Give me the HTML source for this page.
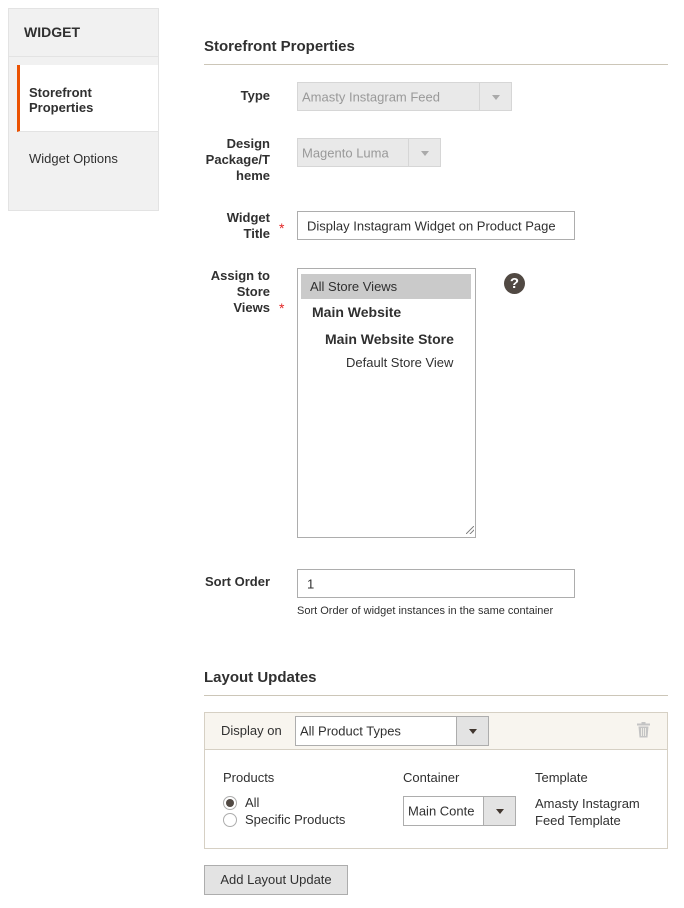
<!DOCTYPE html><html><head><style>
*{box-sizing:border-box;margin:0;padding:0}
body{width:684px;height:908px;background:#fff;font-family:"Liberation Sans",sans-serif;font-size:13px;color:#303030;position:relative;overflow:hidden}
.a{position:absolute;white-space:nowrap}
.lbl{position:absolute;text-align:right;font-weight:bold;color:#303030;font-size:13px;line-height:16px}
.sel{position:absolute;border:1px solid #adadad;background:#fff}
.sel .t{position:absolute;left:4px;top:50%;transform:translateY(-50%);font-size:13px}
.sel .ar{position:absolute;right:0;top:0;bottom:0;border-left:1px solid #adadad;background:#e3e3e3}
.sel .ar:after{content:"";position:absolute;left:50%;top:50%;margin:-2px 0 0 -4px;border:4px solid transparent;border-top:5px solid #41362f;border-bottom:0}
.dis{background:#e9e9e9;border-color:#d6d6d6}
.dis .t{color:#999}
.dis .ar{background:#e9e9e9;border-color:#d6d6d6}
.dis .ar:after{border-top-color:#aaa}
.star{position:absolute;color:#e22626;font-size:14px}
</style></head><body>
<div class="a" style="left:8px;top:8px;width:151px;height:203px;background:#f1f1f1;border:1px solid #e3e3e3"></div>
<div class="a" style="left:8px;top:56px;width:151px;height:1px;background:#e3e3e3"></div>
<div class="a" style="left:24px;top:24px;font-weight:bold;font-size:14px;color:#303030">WIDGET</div>
<div class="a" style="left:17px;top:65px;width:141px;height:67px;background:#fff;border-left:3px solid #eb5202;border-bottom:1px solid #e3e3e3"></div>
<div class="a" style="left:29px;top:85px;font-weight:bold;font-size:13px;line-height:15px;color:#303030">Storefront<br>Properties</div>
<div class="a" style="left:29px;top:151px;font-size:13px;color:#303030">Widget Options</div>

<div class="a" style="left:204px;top:38px;font-weight:bold;font-size:15px;color:#303030">Storefront Properties</div>
<div class="a" style="left:204px;top:64px;width:464px;height:1px;background:#ccc6b8"></div>

<div class="lbl" style="left:200px;width:70px;top:88px">Type</div>
<div class="sel dis" style="left:297px;top:82px;width:215px;height:29px"><span class="t">Amasty Instagram Feed</span><span class="ar" style="width:32px"></span></div>

<div class="lbl" style="left:200px;width:70px;top:136px">Design<br>Package/T<br>heme</div>
<div class="sel dis" style="left:297px;top:138px;width:144px;height:29px"><span class="t">Magento Luma</span><span class="ar" style="width:32px"></span></div>

<div class="lbl" style="left:200px;width:70px;top:210px">Widget<br>Title</div>
<div class="star" style="left:279px;top:220px">*</div>
<div class="sel" style="left:297px;top:211px;width:278px;height:29px"><span class="t" style="left:9px">Display Instagram Widget on Product Page</span></div>

<div class="lbl" style="left:200px;width:70px;top:268px">Assign to<br>Store<br>Views</div>
<div class="star" style="left:279px;top:300px">*</div>
<div class="a" style="left:297px;top:268px;width:179px;height:270px;border:1px solid #adadad"></div>
<div class="a" style="left:301px;top:274px;width:170px;height:25px;background:#cacaca"></div>
<div class="a" style="left:310px;top:279px">All Store Views</div>
<div class="a" style="left:312px;top:304px;font-weight:bold;font-size:14px">Main Website</div>
<div class="a" style="left:325px;top:331px;font-weight:bold;font-size:14px">Main Website Store</div>
<div class="a" style="left:346px;top:355px">Default Store View</div>
<div class="a" style="left:466px;top:526px;width:8px;height:8px;background:linear-gradient(135deg,transparent 45%,#888 45%,#888 55%,transparent 55%,transparent 70%,#888 70%,#888 80%,transparent 80%)"></div>
<div class="a" style="left:504px;top:273px;width:21px;height:21px;border-radius:50%;background:#514943;color:#fff;font-weight:bold;font-size:15px;text-align:center;line-height:21px">?</div>

<div class="lbl" style="left:200px;width:70px;top:574px">Sort Order</div>
<div class="sel" style="left:297px;top:569px;width:278px;height:29px"><span class="t" style="left:9px">1</span></div>
<div class="a" style="left:297px;top:603px;font-size:11px;color:#303030;margin-top:2px">Sort Order of widget instances in the same container</div>

<div class="a" style="left:204px;top:669px;font-weight:bold;font-size:15px">Layout Updates</div>
<div class="a" style="left:204px;top:695px;width:464px;height:1px;background:#ccc6b8"></div>

<div class="a" style="left:204px;top:712px;width:464px;height:137px;border:1px solid #d6d0c4"></div>
<div class="a" style="left:205px;top:713px;width:462px;height:37px;background:#f8f5ef;border-bottom:1px solid #d6d0c4"></div>
<div class="a" style="left:221px;top:723px;color:#303030">Display on</div>
<div class="sel" style="left:295px;top:716px;width:194px;height:30px"><span class="t">All Product Types</span><span class="ar" style="width:32px"></span></div>
<svg class="a" style="left:637px;top:722px" width="13" height="16" viewBox="0 0 13 16"><rect x="0" y="1.5" width="13" height="2" fill="#c4c4c4"/><rect x="4.5" y="0" width="4" height="2" fill="#c4c4c4"/><path d="M1.5 4.5h10l-1 11h-8z" fill="#c4c4c4"/><path d="M4.5 6v8M6.5 6v8M8.5 6v8" stroke="#f8f5ef" stroke-width=".8"/></svg>

<div class="a" style="left:223px;top:770px">Products</div>
<div class="a" style="left:223px;top:796px;width:14px;height:14px;border:1px solid #adadad;border-radius:50%;background:#fff"></div>
<div class="a" style="left:226px;top:799px;width:8px;height:8px;border-radius:50%;background:#514943"></div>
<div class="a" style="left:245px;top:795px">All</div>
<div class="a" style="left:223px;top:813px;width:14px;height:14px;border:1px solid #adadad;border-radius:50%;background:#fff"></div>
<div class="a" style="left:245px;top:812px">Specific Products</div>
<div class="a" style="left:403px;top:770px">Container</div>
<div class="sel" style="left:403px;top:796px;width:113px;height:30px"><span class="t">Main Conte</span><span class="ar" style="width:32px"></span></div>
<div class="a" style="left:535px;top:770px">Template</div>
<div class="a" style="left:535px;top:795px;line-height:17px">Amasty Instagram<br>Feed Template</div>

<div class="a" style="left:204px;top:865px;width:144px;height:30px;background:#e3e3e3;border:1px solid #adadad;text-align:center;line-height:28px;font-size:13px;color:#303030">Add Layout Update</div>
</body></html>
